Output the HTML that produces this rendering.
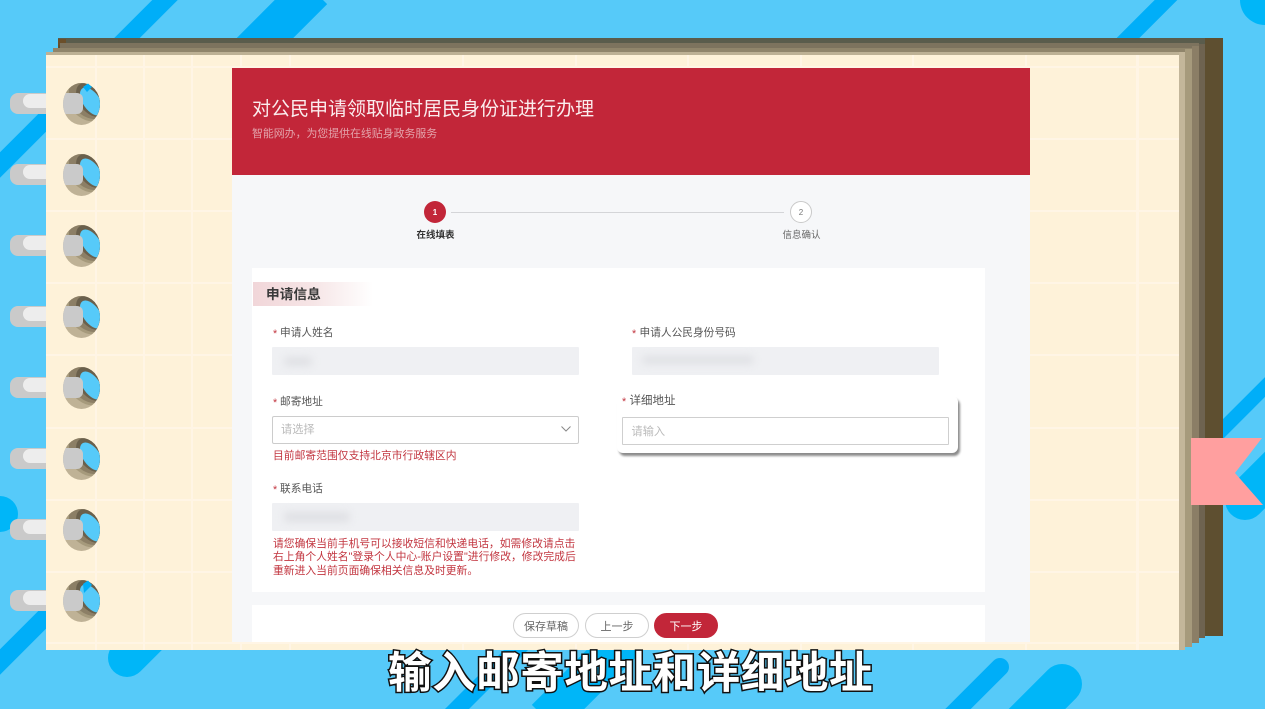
<!DOCTYPE html>
<html lang="zh-CN">
<head>
<meta charset="utf-8">
<title>输入邮寄地址和详细地址</title>
<style>
html,body{margin:0;padding:0;width:1265px;height:709px;overflow:hidden;background:#56CAF9;}
body{position:relative;font-family:"Liberation Sans","Noto Sans CJK SC",sans-serif;}
.a{position:absolute;}
.t{position:absolute;white-space:nowrap;line-height:1;}
.paper{left:46px;top:55px;width:1133px;height:595px;background-color:#FEF2D9;}
.gl{position:absolute;background:#FFF5E5;}
.page{left:232px;top:175px;width:798px;height:467px;background:#F6F7F9;}
.head{left:232px;top:68px;width:798px;height:107px;background:#C22639;}
.card{background:#fff;left:252px;width:733px;}
.lab{font-size:10.7px;color:#555;}
.star{font-size:10.7px;color:#C2353F;}
.ro{background:#EFF0F3;border-radius:1px;height:28px;width:307px;}
.bl{background:#DFE0E4;filter:blur(4px);height:9px;border-radius:4px;}
.err{font-size:10.8px;color:#C2353F;}
.ph{font-size:11.2px;color:#BBB;}
.btn{top:613px;height:25px;box-sizing:border-box;border-radius:13px;border:1px solid #CFCFCF;background:#fff;color:#666;font-size:11px;line-height:26px;text-align:center;}
</style>
</head>
<body>
<svg class="a" style="left:0;top:0" width="1265" height="709" viewBox="0 0 1265 709">
  <g fill="none" stroke="#00AEF8">
    <line x1="175" y1="-10" x2="-10" y2="175" stroke-width="18"/>
    <line x1="313" y1="-10" x2="240" y2="63" stroke-width="40"/>
    <line x1="1176" y1="-10" x2="1100" y2="66" stroke-width="16"/>
    <line x1="-10" y1="672" x2="100" y2="562" stroke-width="18"/>
    <line x1="447" y1="719" x2="530" y2="636" stroke-width="17"/>
    <line x1="1000" y1="667" x2="940" y2="727" stroke-width="18" stroke-linecap="round"/>
    <line x1="1210" y1="442" x2="1275" y2="377" stroke-width="14"/>
  </g>
  <g fill="none" stroke="#00B6F8">
    <line x1="546" y1="719" x2="630" y2="635" stroke-width="40"/>
    <line x1="127" y1="658" x2="170" y2="615" stroke-width="38" stroke-linecap="round"/>
    <line x1="1062" y1="684" x2="1020" y2="726" stroke-width="40" stroke-linecap="round"/>
    <line x1="1245" y1="500" x2="1285" y2="460" stroke-width="40" stroke-linecap="round"/>
  </g>
  <circle cx="1265" cy="0" r="25" fill="#00B6F8"/>
  <circle cx="0" cy="514" r="18" fill="#00B6F8"/>

  <!-- book edge stack -->
  <polygon points="58,38 1223,38 1223,636 1205,636 1100,100 58,100" fill="#5E4F30"/>
  <rect x="58" y="38" width="1147" height="6" fill="#5A5C4C"/>
  <rect x="58" y="39" width="8" height="6" fill="#6B4F2A"/>
  <rect x="60" y="43" width="1139" height="5" fill="#7D735E"/>
  <rect x="53" y="48" width="1146" height="4" fill="#90856B"/>
  <rect x="46" y="52" width="1139" height="4" fill="#BDB195"/>
  <rect x="1199" y="44" width="6" height="594" fill="#6E6350"/>
  <rect x="1192" y="46" width="7" height="597" fill="#8B7E66"/>
  <rect x="1185" y="49" width="7" height="598" fill="#A69A7C"/>
  <rect x="1179" y="52" width="6" height="598" fill="#C3B69A"/>

  <!-- pills left of paper -->
  <g id="pills">
    <g fill="#CACACA">
      <rect x="10" y="93" width="50" height="21" rx="8"/><rect x="10" y="164" width="50" height="21" rx="8"/>
      <rect x="10" y="235" width="50" height="21" rx="8"/><rect x="10" y="306" width="50" height="21" rx="8"/>
      <rect x="10" y="377" width="50" height="21" rx="8"/><rect x="10" y="448" width="50" height="21" rx="8"/>
      <rect x="10" y="519" width="50" height="21" rx="8"/><rect x="10" y="590" width="50" height="21" rx="8"/>
    </g>
    <g fill="#EDEDED">
      <rect x="23" y="94" width="40" height="14" rx="7"/><rect x="23" y="165" width="40" height="14" rx="7"/>
      <rect x="23" y="236" width="40" height="14" rx="7"/><rect x="23" y="307" width="40" height="14" rx="7"/>
      <rect x="23" y="378" width="40" height="14" rx="7"/><rect x="23" y="449" width="40" height="14" rx="7"/>
      <rect x="23" y="520" width="40" height="14" rx="7"/><rect x="23" y="591" width="40" height="14" rx="7"/>
    </g>
  </g>
</svg>

<div class="a paper">
  <div class="gl" style="left:0;top:11px;width:1133px;height:2px"></div>
  <div class="gl" style="left:0;top:83px;width:1133px;height:2px"></div>
  <div class="gl" style="left:0;top:155px;width:1133px;height:2px"></div>
  <div class="gl" style="left:0;top:227px;width:1133px;height:2px"></div>
  <div class="gl" style="left:0;top:299px;width:1133px;height:2px"></div>
  <div class="gl" style="left:0;top:372px;width:1133px;height:2px"></div>
  <div class="gl" style="left:0;top:444px;width:1133px;height:2px"></div>
  <div class="gl" style="left:0;top:516px;width:1133px;height:2px"></div>
  <div class="gl" style="left:0;top:587px;width:1133px;height:2px"></div>
  <div class="gl" style="top:0;left:49px;width:2px;height:595px"></div>
  <div class="gl" style="top:0;left:97px;width:2px;height:595px"></div>
  <div class="gl" style="top:0;left:145px;width:2px;height:595px"></div>
  <div class="gl" style="top:0;left:194px;width:2px;height:595px"></div>
  <div class="gl" style="top:0;left:243px;width:2px;height:595px"></div>
  <div class="gl" style="top:0;left:416px;width:2px;height:595px"></div>
  <div class="gl" style="top:0;left:529px;width:2px;height:595px"></div>
  <div class="gl" style="top:0;left:641px;width:2px;height:595px"></div>
  <div class="gl" style="top:0;left:754px;width:2px;height:595px"></div>
  <div class="gl" style="top:0;left:866px;width:2px;height:595px"></div>
  <div class="gl" style="top:0;left:979px;width:2px;height:595px"></div>
  <div class="gl" style="top:0;left:1090px;width:3px;height:595px"></div>
</div>

<!-- binding holes -->
<svg class="a" style="left:0;top:0" width="1265" height="709" viewBox="0 0 1265 709">
  <defs>
    <clipPath id="hc"><ellipse cx="0" cy="0" rx="18.5" ry="21"/></clipPath>
    <g id="hole" clip-path="url(#hc)">
      <rect x="-20" y="-22" width="40" height="44" fill="#BFB296"/>
      <ellipse cx="5" cy="-5" rx="18" ry="24" transform="rotate(-35 5 -5)" fill="#A69A7C"/>
      <ellipse cx="6" cy="-6" rx="16" ry="23" transform="rotate(-35 6 -6)" fill="#8C7F66"/>
      <ellipse cx="9" cy="-4" rx="11.5" ry="19" transform="rotate(-35 9 -4)" fill="#6A604C"/>
      <ellipse cx="10" cy="-2.5" rx="8.5" ry="16" transform="rotate(-35 10 -2.5)" fill="#56CAF9"/>
      <rect x="-30" y="-11" width="31.5" height="21" rx="6" fill="#CACACA"/>
    </g>
  </defs>
  <use href="#hole" x="81.5" y="104"/>
  <use href="#hole" x="81.5" y="175"/>
  <use href="#hole" x="81.5" y="246"/>
  <use href="#hole" x="81.5" y="317"/>
  <use href="#hole" x="81.5" y="388"/>
  <use href="#hole" x="81.5" y="459"/>
  <use href="#hole" x="81.5" y="530"/>
  <use href="#hole" x="81.5" y="601"/>
  <polygon points="83,87 88,83.5 92,87 87,92" fill="#00AEF8"/>
  <polygon points="83,584 88,580.5 92,585 84,593" fill="#00AEF8"/>
  <polygon points="1191,438 1262,438 1235,473 1263,505 1191,505" fill="#FF9F9F"/>
</svg>

<div class="a page"></div>
<div class="a head"></div>
<div class="t" style="left:252px;top:99.5px;font-size:19px;color:#FBEDEE;">对公民申请领取临时居民身份证进行办理</div>
<div class="t" style="left:252px;top:129px;font-size:10.9px;color:#E3A3AB;">智能网办，为您提供在线贴身政务服务</div>

<!-- stepper -->
<div class="a" style="left:451px;top:212px;width:333px;height:1px;background:#D4D5D8"></div>
<div class="a" style="left:424px;top:201px;width:22px;height:22px;border-radius:50%;background:#C22639"></div>
<div class="t" style="left:424px;top:208.5px;width:22px;text-align:center;font-size:8px;font-weight:bold;color:#fff;">1</div>
<div class="a" style="left:790px;top:201px;width:22px;height:22px;box-sizing:border-box;border-radius:50%;background:#fff;border:1px solid #C9C9C9"></div>
<div class="t" style="left:790px;top:208.5px;width:22px;text-align:center;font-size:8px;color:#777;">2</div>
<div class="t" style="left:416.5px;top:231px;font-size:9.5px;font-weight:bold;color:#333;">在线填表</div>
<div class="t" style="left:782.5px;top:231px;font-size:9.5px;color:#666;">信息确认</div>

<!-- form card -->
<div class="a card" style="top:268px;height:324px;"></div>
<div class="a" style="left:253px;top:282px;width:120px;height:24px;background:linear-gradient(to right,#F1D6D9 0%,#F6E5E6 50%,#ffffff 100%)"></div>
<div class="t" style="left:266px;top:288px;font-size:13.7px;font-weight:bold;color:#3A3A3A;">申请信息</div>

<div class="t star" style="left:273px;top:328.5px;">*</div>
<div class="t lab" style="left:280px;top:327.5px;">申请人姓名</div>
<div class="a ro" style="left:272px;top:347px;"></div>
<div class="a bl" style="left:284px;top:357px;width:28px;"></div>

<div class="t star" style="left:632px;top:328.5px;">*</div>
<div class="t lab" style="left:639.5px;top:327.5px;">申请人公民身份号码</div>
<div class="a ro" style="left:631.5px;top:347px;"></div>
<div class="a bl" style="left:642px;top:356px;width:112px;height:8px;"></div>

<div class="t star" style="left:273px;top:397.5px;">*</div>
<div class="t lab" style="left:280px;top:396.5px;">邮寄地址</div>
<div class="a" style="left:272px;top:416px;width:307px;height:28px;box-sizing:border-box;border:1px solid #CCC;border-radius:2px;background:#fff"></div>
<div class="t ph" style="left:281px;top:425px;">请选择</div>
<svg class="a" style="left:560px;top:425px" width="12" height="8" viewBox="0 0 12 8"><path d="M1.5 1.5 L6 6 L10.5 1.5" fill="none" stroke="#888" stroke-width="1"/></svg>
<div class="t err" style="left:273px;top:451px;">目前邮寄范围仅支持北京市行政辖区内</div>

<!-- highlighted detail address popup -->
<div class="a" style="left:617px;top:396px;width:341px;height:57px;background:#fff;border-radius:6px;box-shadow:2px 3px 2px #8C8C8C"></div>
<div class="t star" style="left:622px;top:396.5px;">*</div>
<div class="t" style="left:629.5px;top:395.5px;font-size:11.5px;color:#555;">详细地址</div>
<div class="a" style="left:622px;top:416.5px;width:327px;height:28px;box-sizing:border-box;border:1px solid #CFCFCF;border-radius:1px;background:#fff"></div>
<div class="t ph" style="left:631.5px;top:426.5px;">请输入</div>

<div class="t star" style="left:273px;top:484.5px;">*</div>
<div class="t lab" style="left:280px;top:483.5px;">联系电话</div>
<div class="a ro" style="left:272px;top:503px;"></div>
<div class="a bl" style="left:284px;top:512px;width:66px;height:10px;"></div>

<div class="t err" style="left:273px;top:538.5px;">请您确保当前手机号可以接收短信和快递电话，如需修改请点击</div>
<div class="t err" style="left:273px;top:552px;">右上角个人姓名"登录个人中心-账户设置"进行修改，修改完成后</div>
<div class="t err" style="left:273px;top:565.5px;">重新进入当前页面确保相关信息及时更新。</div>

<!-- buttons card -->
<div class="a card" style="top:605px;height:37px;"></div>
<div class="a btn" style="left:513px;width:66px;">保存草稿</div>
<div class="a btn" style="left:585px;width:64px;">上一步</div>
<div class="a btn" style="left:654px;width:64px;background:#C22639;border-color:#C22639;color:#fff;">下一步</div>

<!-- caption -->
<div class="t" style="left:388px;top:652.5px;font-size:43.5px;font-weight:700;letter-spacing:.6px;color:#fff;-webkit-text-stroke:3px #111;paint-order:stroke fill;">输入邮寄地址和详细地址</div>
</body>
</html>
